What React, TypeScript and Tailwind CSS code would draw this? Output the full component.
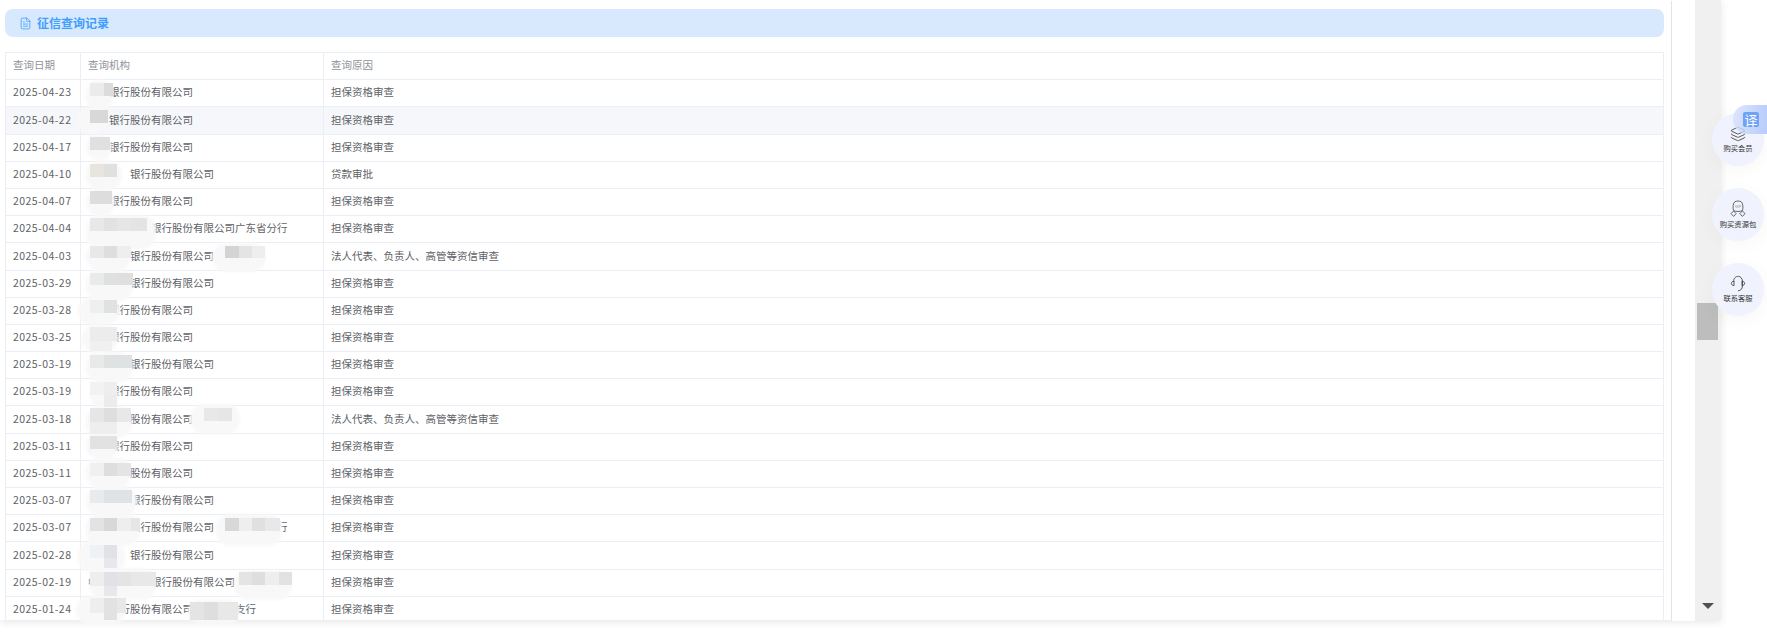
import React from 'react';
import { FileText, Layers } from 'lucide-react';

// □ marks a character that is covered by a mosaic in the screenshot
const records = [
  ['2025-04-23', '□□银行股份有限公司', '担保资格审查'],
  ['2025-04-22', '□□银行股份有限公司', '担保资格审查'],
  ['2025-04-17', '□□银行股份有限公司', '担保资格审查'],
  ['2025-04-10', '□□□□银行股份有限公司', '贷款审批'],
  ['2025-04-07', '□□银行股份有限公司', '担保资格审查'],
  ['2025-04-04', '□□□□□□银行股份有限公司广东省分行', '担保资格审查'],
  ['2025-04-03', '□□□□银行股份有限公司', '法人代表、负责人、高管等资信审查'],
  ['2025-03-29', '□□□□银行股份有限公司', '担保资格审查'],
  ['2025-03-28', '□□银行股份有限公司', '担保资格审查'],
  ['2025-03-25', '□□银行股份有限公司', '担保资格审查'],
  ['2025-03-19', '□□□□银行股份有限公司', '担保资格审查'],
  ['2025-03-19', '□□银行股份有限公司', '担保资格审查'],
  ['2025-03-18', '□□银行股份有限公司', '法人代表、负责人、高管等资信审查'],
  ['2025-03-11', '□□银行股份有限公司', '担保资格审查'],
  ['2025-03-11', '□□银行股份有限公司', '担保资格审查'],
  ['2025-03-07', '□□□□银行股份有限公司', '担保资格审查'],
  ['2025-03-07', '□□□□银行股份有限公司□□□□□□行', '担保资格审查'],
  ['2025-02-28', '□□□□银行股份有限公司', '担保资格审查'],
  ['2025-02-19', '中□□□□□银行股份有限公司', '担保资格审查'],
  ['2025-01-24', '□□银行股份有限公司□□□□支行', '担保资格审查'],
];

// soft pale smears: x, y, w, h
const smears = [
  [86, 80, 27, 30], [76, 107, 32, 26], [86, 134, 26, 26], [86, 160, 36, 30], [86, 188, 29, 28],
  [86, 215, 70, 34], [86, 243, 45, 28], [212, 243, 54, 29], [86, 269, 47, 32], [78, 297, 42, 28],
  [82, 325, 36, 28], [86, 352, 47, 30], [90, 382, 28, 26], [86, 406, 46, 32], [190, 404, 50, 30],
  [86, 433, 32, 26], [86, 458, 45, 30], [86, 486, 51, 30], [86, 514, 54, 32], [216, 514, 66, 32],
  [78, 541, 47, 32], [90, 568, 66, 32], [234, 570, 58, 30], [76, 596, 50, 28], [188, 600, 52, 24],
];

// mosaic blocks: x, y, w, h, colour
const blocks: [number, number, number, number, string][] = [
  [90, 83, 14, 13, '#ebebeb'], [104, 83, 9, 13, '#dcdcdc'],
  [90, 110, 18, 13, '#d8d8d8'],
  [90, 137, 20, 13, '#e0e0e0'],
  [90, 164, 14, 13, '#e8e4de'], [104, 164, 13, 13, '#e0e0e0'],
  [90, 191, 22, 13, '#dddddd'],
  [90, 218, 14, 13, '#e8e8e8'], [104, 218, 13, 13, '#e2e2e2'], [117, 218, 14, 13, '#e6e6e6'], [131, 218, 16, 13, '#e4e4e4'],
  [90, 246, 14, 12, '#e8e8e8'], [104, 246, 13, 12, '#dedede'], [117, 246, 14, 12, '#eeeeee'],
  [225, 246, 14, 12, '#d4d4d4'], [239, 246, 13, 12, '#e4e4e4'], [252, 246, 13, 12, '#eeeeee'],
  [90, 273, 14, 12, '#e9eaea'], [104, 273, 13, 12, '#dfe0e0'], [117, 273, 16, 12, '#dfdfdf'],
  [90, 300, 14, 13, '#eef0f0'], [104, 300, 13, 13, '#e0e2e2'],
  [90, 327, 27, 14, '#ececec'], [90, 341, 22, 10, '#f0f0f0'],
  [90, 355, 14, 13, '#e8eaea'], [104, 355, 28, 13, '#dfe2e2'],
  [90, 382, 14, 13, '#f2f2f2'], [104, 382, 13, 13, '#eeeeee'], [104, 395, 13, 12, '#ececec'],
  [90, 408, 14, 14, '#e6e6e6'], [104, 408, 13, 14, '#dedede'], [117, 408, 14, 14, '#e8e8e8'],
  [90, 422, 27, 12, '#eeeeee'], [204, 408, 14, 13, '#e8e8e8'], [218, 408, 14, 13, '#e6e6e6'],
  [90, 436, 27, 13, '#e2e2e2'],
  [90, 463, 14, 13, '#f0f0f0'], [104, 463, 13, 13, '#dedede'], [117, 463, 14, 13, '#e4e4e4'],
  [90, 490, 14, 13, '#e8eaec'], [104, 490, 28, 13, '#e0e3e6'],
  [90, 518, 14, 13, '#e4e2e2'], [104, 518, 13, 13, '#d8d8d8'], [117, 518, 14, 13, '#eeeeee'], [131, 518, 9, 13, '#e6e6e6'],
  [225, 518, 14, 13, '#d8d8d8'], [239, 518, 13, 13, '#eeeeee'], [252, 518, 13, 13, '#e0e0e0'], [265, 518, 15, 13, '#e8e8e8'],
  [90, 545, 14, 13, '#eef2f6'], [104, 545, 13, 13, '#e0e2e6'], [104, 558, 13, 10, '#e8e8ec'],
  [90, 572, 14, 14, '#eeeeee'], [104, 572, 13, 14, '#e2e2e6'], [117, 572, 14, 14, '#e4e4e4'], [131, 572, 25, 14, '#e8e8e8'],
  [104, 586, 13, 10, '#e8e8ec'], [239, 572, 13, 13, '#e4e4e4'], [252, 572, 13, 13, '#dedede'], [265, 572, 14, 13, '#eeeeee'], [279, 572, 13, 13, '#e2e2e2'],
  [90, 598, 14, 15, '#eeeeee'], [104, 598, 13, 22, '#e2e2e2'], [117, 598, 9, 15, '#e8e8e8'],
  [190, 602, 14, 18, '#e4e4e4'], [204, 602, 14, 18, '#dedede'], [218, 602, 20, 18, '#e8e8e8'],
];

const OrgName: React.FC<{ text: string }> = ({ text }) => (
  <>
    {text.split(/(□+)/).map((part, index) =>
      part.startsWith('□') ? (
        <span key={index} className="invisible">{part}</span>
      ) : (
        <span key={index}>{part}</span>
      )
    )}
  </>
);

const VipIcon = () => (
  <svg width="16" height="18" viewBox="0 0 16 18" fill="none" stroke="#444" strokeWidth="0.8" strokeLinejoin="round">
    <path d="M3.5 10.5 C2.6 8 3 2.6 5 1.6 C6.5 0.9 9.5 0.9 11 1.6 C13 2.6 13.4 8 12.5 10.5 C10.5 11.8 5.5 11.8 3.5 10.5 Z" />
    <text x="8" y="7.6" fontSize="4" textAnchor="middle" fill="#888" stroke="none">VIP</text>
    <path d="M3.6 11 L6.2 13.6 L3.6 16.4 L1 13.6 Z" />
    <path d="M12.4 11 L15 13.6 L12.4 16.4 L9.8 13.6 Z" />
  </svg>
);

const HeadsetIcon = () => (
  <svg width="16" height="17" viewBox="0 0 16 17" fill="none" stroke="#444" strokeWidth="0.9" strokeLinecap="round" strokeLinejoin="round">
    <path d="M3.6 6.4 C3.6 -0.4 12.4 -0.4 12.4 6.4 V11 C12.4 14 10.6 15.6 8.4 15.8" />
    <path d="M3.6 6.2 C2 6.4 1.4 7.4 1.4 8.4 C1.4 9.6 2.2 10.4 3.6 10.6 Z" />
    <path d="M12.4 6.2 C14 6.4 14.6 7.4 14.6 8.4 C14.6 9.6 13.8 10.4 12.4 10.6 Z" />
  </svg>
);

const actions = [
  { label: '购买会员', icon: <Layers size={16} strokeWidth={1.2} color="#333" /> },
  { label: '购买资源包', icon: <VipIcon /> },
  { label: '联系客服', icon: <HeadsetIcon /> },
];

const App: React.FC = () => {
  return (
    <div
      className="relative h-[633px] w-[1767px] overflow-hidden bg-white text-[10.5px] text-[#606266]"
      style={{ fontFamily: '"Noto Sans CJK SC", "Noto Sans", sans-serif' }}
    >
      <div className="flex h-[620px] w-[1721px] shadow-[0_2px_8px_rgba(0,0,0,0.1)]">
        <main className="h-full w-[1671px] overflow-hidden bg-white pl-[5px] pt-[9px]">
          <div className="flex h-[28px] w-[1659px] items-center gap-[5px] rounded-[8px] bg-[#d9e9fd] pl-[14px] text-[12px] font-bold text-[#409eff]">
            <FileText size={13} strokeWidth={1.5} />
            <span>征信查询记录</span>
          </div>

          {/* Records table */}
          <div className="mt-[15px] w-[1659px] border-x border-t border-[#ebeef5]">
            <div className="grid h-[27.2px] grid-cols-[75px_243px_1fr] items-center border-b border-[#ebeef5] text-[#909399]">
              <div className="flex h-full items-center border-r border-[#ebeef5] pb-[2px] pl-[7px]">查询日期</div>
              <div className="flex h-full items-center border-r border-[#ebeef5] pb-[2px] pl-[7px]">查询机构</div>
              <div className="pb-[2px] pl-[7px]">查询原因</div>
            </div>
            {records.map(([date, org, reason], index) => (
              <div
                key={index}
                className={`grid h-[27.2px] grid-cols-[75px_243px_1fr] items-center border-b border-[#ebeef5] ${
                  index === 1 ? 'bg-[#f5f7fa]' : 'bg-white'
                }`}
              >
                <div className="flex h-full items-center border-r border-[#ebeef5] pb-[2px] pl-[7px] tracking-[0.45px]">{date}</div>
                <div className="flex h-full items-center whitespace-pre border-r border-[#ebeef5] pb-[2px] pl-[7px]">
                  <OrgName text={org} />
                </div>
                <div className="pb-[2px] pl-[7px]">{reason}</div>
              </div>
            ))}
          </div>
        </main>

        <div className="mt-px h-full w-[24px] border-l border-[#e4e4e4] bg-white"></div>

        {/* Scrollbar */}
        <div className="flex h-full w-[26px] flex-col items-center bg-[#f0f0f0]">
          <div className="ml-[-1px] mt-[303px] h-[37px] w-[21px] bg-[#bdbdbd]"></div>
          <div className="mb-[11px] mt-auto h-0 w-0 border-x-[6px] border-t-[6px] border-x-transparent border-t-[#505050]"></div>
        </div>
      </div>

      {/* Mosaics laid over the bank names */}
      <div className="pointer-events-none absolute inset-x-0 top-0 h-[624px] overflow-hidden">
        {smears.map(([x, y, w, h], index) => (
          <div
            key={index}
            className="absolute rounded-[14px] bg-[#f8f8f8] blur-[1.5px]"
            style={{ left: x, top: y, width: w, height: h }}
          />
        ))}
        {blocks.map(([x, y, w, h, colour], index) => (
          <div
            key={index}
            className="absolute blur-[0.4px]"
            style={{ left: x, top: y, width: w, height: h, backgroundColor: colour }}
          />
        ))}
      </div>

      {/* Floating actions */}
      <div className="absolute right-[3px] top-[113px] flex flex-col gap-[22px]">
        {actions.map((action) => (
          <div
            key={action.label}
            className="flex h-[53px] w-[52px] flex-col items-center justify-center gap-[1px] rounded-full bg-[#f0f2fd] text-[7.3px] leading-[11px] text-[#333] shadow-[0_4px_16px_rgba(120,100,60,0.05)]"
          >
            {action.icon}
            <span>{action.label}</span>
          </div>
        ))}
      </div>

      {/* Translate tab */}
      <div className="absolute right-0 top-[105px] flex h-[29px] w-[34px] items-center rounded-l-[14px] bg-gradient-to-r from-[#d6e1fc]/80 to-[#a8c0fa]/80 pl-[10px]">
        <div className="flex h-[15px] w-[16px] items-center justify-center rounded-[2px] bg-[#6fa3f8] text-[13px] leading-none text-white">
          译
        </div>
      </div>
    </div>
  );
};

export default App;
